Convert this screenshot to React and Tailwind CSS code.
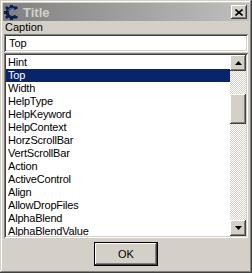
import React from 'react';

const raised = "shadow-[inset_-1px_-1px_#404040,inset_1px_1px_#ffffff,inset_-2px_-2px_#808080,inset_2px_2px_#d4d0c8]";
const sunken = "shadow-[inset_1px_1px_#808080,inset_-1px_-1px_#ffffff,inset_2px_2px_#404040,inset_-2px_-2px_#d4d0c8]";

const items = [
  'Hint', 'Top', 'Width', 'HelpType', 'HelpKeyword', 'HelpContext', 'HorzScrollBar',
  'VertScrollBar', 'Action', 'ActiveControl', 'Align', 'AllowDropFiles', 'AlphaBlend', 'AlphaBlendValue',
];

const AppIcon = () => (
  <svg width="15" height="15" viewBox="0 0 15 15">
    <g fill="#0b1f4a">
      <rect x="6" y="0" width="3" height="2" />
      <rect x="6" y="13" width="3" height="2" />
      <rect x="0" y="6" width="2" height="3" />
      <rect x="1.5" y="1.5" width="2.5" height="2.5" />
      <rect x="1.5" y="11" width="2.5" height="2.5" />
      <rect x="11" y="1.5" width="2.5" height="2.5" />
      <rect x="11" y="11" width="2.5" height="2.5" />
    </g>
    <path d="M12 4.2 A5 5 0 1 0 12 10.8" fill="none" stroke="#0b1f4a" strokeWidth="3.2" />
    <path d="M10.6 4.4 A4 4 0 0 0 4 6" fill="none" stroke="#3a78c8" strokeWidth="1" />
  </svg>
);

const Arrow = ({ down }) => (
  <svg width="7" height="4" viewBox="0 0 7 4" className={down ? 'rotate-180' : ''}>
    <path d="M3.5 0 L7 4 L0 4 Z" fill="#000" />
  </svg>
);

export default function App() {
  return (
    <div
      className="w-[252px] h-[273px] bg-[#d4d0c8] p-[3px] flex flex-col shadow-[inset_-1px_-1px_#404040,inset_1px_1px_#d4d0c8,inset_-2px_-2px_#808080,inset_2px_2px_#ffffff]"
      style={{ fontFamily: '"Liberation Sans", Arial, sans-serif' }}
    >
      {/* Title bar */}
      <div className="h-[18px] shrink-0 flex items-center bg-gradient-to-r from-[#808080] to-[#c0c0c0] pl-[1px] pr-[2px]">
        <AppIcon />
        <span className="ml-[4px] text-[13px] font-bold text-[#d4d0c8] leading-none">Title</span>
        <div className={`ml-auto w-[16px] h-[14px] bg-[#d4d0c8] flex items-center justify-center ${raised}`}>
          <svg width="8" height="7" viewBox="0 0 8 7">
            <path d="M0.5 0.5 L7.5 6.5 M7.5 0.5 L0.5 6.5" stroke="#000" strokeWidth="1.6" />
          </svg>
        </div>
      </div>

      <div className="flex-1 flex flex-col px-[1px]">
        <div className="h-[13px] text-[11px] leading-[13px] text-black pl-[1px]">Caption</div>

        <div className={`h-[18px] bg-white ${sunken} flex items-center pl-[5px] text-[11px] text-black`}>
          Top
        </div>

        {/* List box */}
        <div className={`mt-[1px] h-[185px] bg-white ${sunken} p-[2px] flex`}>
          <div className="flex-1 overflow-hidden pt-[1px]">
            {items.map((it) => (
              <div
                key={it}
                className={`h-[13px] leading-[13px] text-[11px] tracking-[-0.2px] pl-[2px] ${it === 'Top' ? 'bg-[#0a246a] text-white' : 'text-black'}`}
              >
                {it}
              </div>
            ))}
          </div>
          <div className="w-[16px] flex flex-col bg-[repeating-conic-gradient(#ffffff_0_25%,#d4d0c8_0_50%)] bg-[length:2px_2px]">
            <div className={`h-[16px] bg-[#d4d0c8] flex items-center justify-center ${raised}`}>
              <Arrow />
            </div>
            <div className="h-[23px]" />
            <div className={`h-[30px] bg-[#d4d0c8] ${raised}`} />
            <div className="flex-1" />
            <div className={`h-[16px] bg-[#d4d0c8] flex items-center justify-center ${raised}`}>
              <Arrow down />
            </div>
          </div>
        </div>

        {/* Footer */}
        <div className="flex-1 flex items-center justify-center">
          <div className="w-[64px] h-[24px] border border-black">
            <div className={`w-full h-full bg-[#d4d0c8] flex items-center justify-center text-[11px] text-black ${raised}`}>
              OK
            </div>
          </div>
        </div>
      </div>
    </div>
  );
}
